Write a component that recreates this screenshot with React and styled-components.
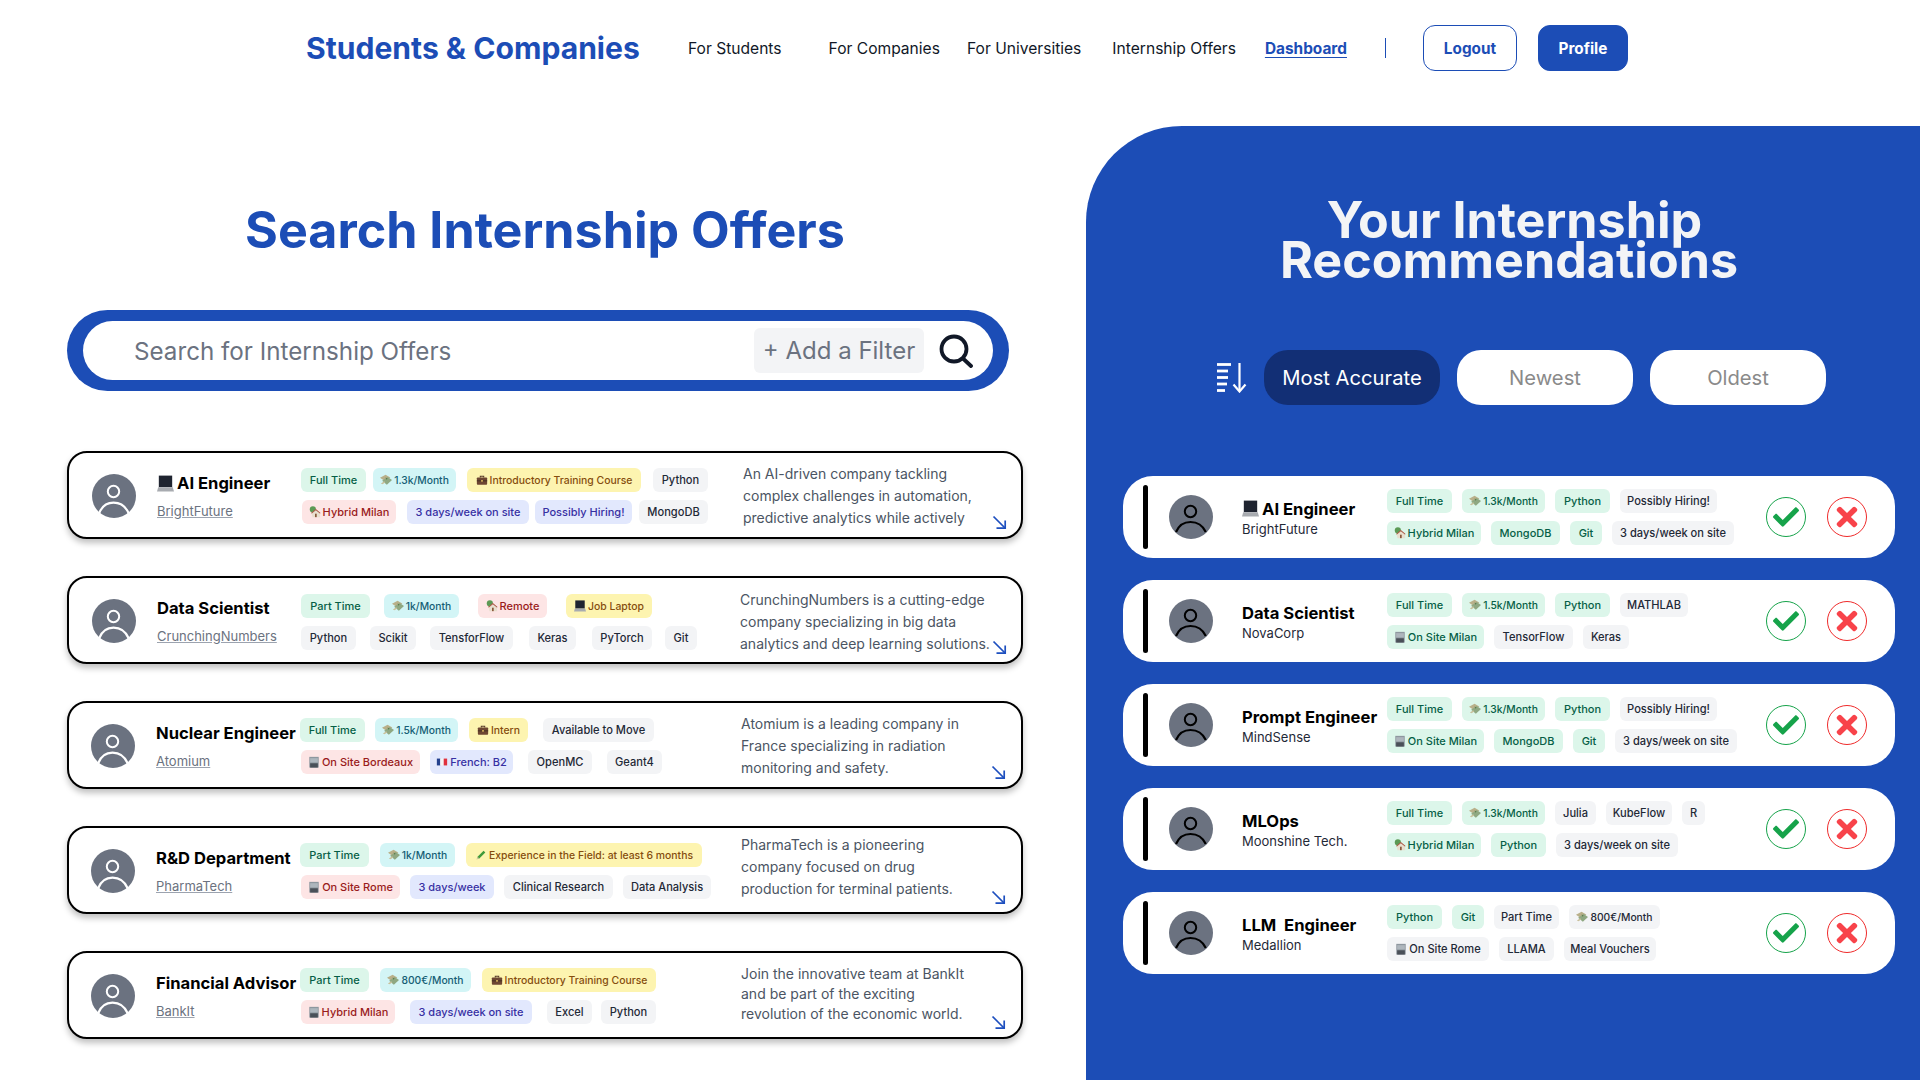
import React from "react";
import styled, { createGlobalStyle } from "styled-components";
import { FaCheck, FaTimes } from "react-icons/fa";

const BLUE = "#1c4db6";

const Global = createGlobalStyle`
  * { box-sizing: border-box; }
  html, body { margin: 0; padding: 0; background: #fff; }
  body { font-family: Inter, "Noto Sans", sans-serif; color: #111827; }
`;

const Page = styled.div`
  width: 1920px;
  height: 1080px;
  overflow: hidden;
  background: #fff;
  display: flex;
  flex-direction: column;
`;

const Nav = styled.nav`
  height: 96px;
  flex: none;
  display: flex;
  align-items: center;
  padding-left: 306px;
`;
const Logo = styled.div`
  font-size: 30.1px;
  font-weight: 700;
  color: ${BLUE};
  width: 382px;
`;
const NavLink = styled.a`
  font-size: ${(p) => (p.$active ? 15.4 : 15.6)}px;
  color: ${(p) => (p.$active ? BLUE : "#111827")};
  font-weight: ${(p) => (p.$active ? 700 : 400)};
  text-decoration: ${(p) => (p.$active ? "underline" : "none")};
  text-underline-offset: 3px;
  margin-left: ${(p) => p.$ml || 0}px;
  white-space: nowrap;
`;
const NavDivider = styled.span`
  width: 1px;
  height: 20px;
  background: ${BLUE};
  margin: 0 37px 0 38px;
`;
const NavButton = styled.button`
  height: 46px;
  width: ${(p) => p.$w}px;
  margin-left: ${(p) => p.$ml || 0}px;
  border-radius: 12px;
  border: 1px solid ${BLUE};
  background: ${(p) => (p.$solid ? BLUE : "#fff")};
  color: ${(p) => (p.$solid ? "#fff" : BLUE)};
  font: 700 15.3px Inter, sans-serif;
`;

const Main = styled.main`
  flex: 1;
  display: flex;
  min-height: 0;
`;

const Left = styled.section`
  width: 1086px;
  flex: none;
  padding: 104px 0 0 67px;
`;
const SearchTitle = styled.h1`
  margin: 0 0 50px 0;
  width: 956px;
  text-align: center;
  font-size: 50.2px;
  line-height: 60px;
  font-weight: 700;
  color: ${BLUE};
`;
const SearchBar = styled.div`
  width: 942px;
  height: 81px;
  padding: 11px 16px;
  background: ${BLUE};
  border-radius: 41px;
  margin-bottom: 60px;
`;
const SearchInner = styled.div`
  height: 59px;
  background: #fff;
  border-radius: 30px;
  display: flex;
  align-items: center;
  padding-left: 51px;
`;
const Placeholder = styled.span`
  flex: 1;
  font-size: 24.2px;
  color: #6b7280;
  padding-top: 1px;
`;
const FilterBox = styled.span`
  width: 170px;
  height: 45px;
  background: #f3f4f6;
  border-radius: 6px;
  display: flex;
  align-items: center;
  justify-content: center;
  font-size: 24px;
  color: #6b7280;
  white-space: nowrap;
`;
const SearchIcon = styled.svg`
  width: 34px;
  height: 34px;
  margin: 0 20px 0 15px;
`;

const CardList = styled.div`
  display: flex;
  flex-direction: column;
  gap: 37px;
`;
const OfferCard = styled.article`
  position: relative;
  width: 956px;
  height: 88px;
  flex: none;
  border: 2px solid #000;
  border-radius: 20px;
  background: #fff;
  box-shadow: 0 4px 6px rgba(0, 0, 0, 0.25);
  display: flex;
  align-items: flex-start;
  padding-left: ${(p) => p.$pad}px;
`;
const Avatar = styled.svg`
  width: 44px;
  height: 44px;
  flex: none;
`;
const OfferAvatar = styled(Avatar)`
  margin-top: 21px;
`;
const OfferPerson = styled.div`
  width: 144px;
  flex: none;
  margin-left: 21px;
  padding-top: 19px;
`;
const Title = styled.div`
  font-size: 16.6px;
  line-height: 22px;
  font-weight: 700;
  color: #000;
  white-space: pre;
  display: flex;
  align-items: center;
  gap: 3px;
`;
const CompanyLink = styled.a`
  display: block;
  margin-top: 9px;
  font-size: 13px;
  line-height: 16px;
  color: #6b7280;
  text-decoration: underline;
  text-decoration-color: #9ca3af;
`;
const OfferTags = styled.div`
  width: ${(p) => p.$w}px;
  flex: none;
  padding-top: ${(p) => p.$top}px;
  display: flex;
  flex-direction: column;
  gap: 8px;
`;
const TagRow = styled.div`
  display: flex;
  gap: ${(p) => p.$gap || 0}px;
`;
const TAG = {
  green: ["#dcf6ea", "#065f46", 11],
  cyan: ["#d3f5f6", "#155e75", 11],
  yellow: ["#fdf4b0", "#854d0e", 10.4],
  red: ["#fde5e5", "#991b1b", 11],
  indigo: ["#e2e8fd", "#3730a3", 11],
  gray: ["#f3f4f6", "#1f2937", 11.1],
};
const Tag = styled.span`
  height: 24px;
  width: ${(p) => p.$w}px;
  margin-left: ${(p) => p.$ml || 0}px;
  border-radius: 6px;
  background: ${(p) => TAG[p.$kind][0]};
  color: ${(p) => TAG[p.$kind][1]};
  font-size: ${(p) => (p.$small ? 10.3 : TAG[p.$kind][2])}px;
  font-weight: 500;
  display: inline-flex;
  align-items: center;
  justify-content: center;
  gap: 2px;
  white-space: nowrap;
  flex: none;
`;
const Desc = styled.p`
  margin: 0;
  padding-top: ${(p) => p.$top}px;
  width: 215px;
  font-size: 14px;
  line-height: ${(p) => p.$lh}px;
  color: #4b5563;
  white-space: nowrap;
`;
const OpenArrow = styled.svg`
  position: absolute;
  right: ${(p) => p.$right}px;
  bottom: 7px;
  width: 15px;
  height: 15px;
`;

const Panel = styled.section`
  flex: 1;
  margin-top: 30px;
  background: ${BLUE};
  border-top-left-radius: 96px;
  padding: 74px 25px 0 37px;
`;
const PanelTitle = styled.h2`
  margin: 0 0 70px;
  text-align: center;
  color: #f3f4f6;
  font-size: 50.2px;
  line-height: 40px;
  font-weight: 700;
`;
const PanelTitleFirst = styled.span`
  display: block;
  padding-left: 11px;
`;
const SortRow = styled.div`
  display: flex;
  align-items: center;
  gap: 17px;
  padding-left: 94px;
  margin-bottom: 71px;
`;
const SortIcon = styled.svg`
  width: 30px;
  height: 30px;
  flex: none;
`;
const SortButton = styled.button`
  width: 176px;
  height: 55px;
  border: 0;
  border-radius: 24px;
  background: ${(p) => (p.$active ? "#122f75" : "#fff")};
  color: ${(p) => (p.$active ? "#fff" : "#8a8a8a")};
  font: 400 20.2px Inter, sans-serif;
`;
const RecList = styled.div`
  display: flex;
  flex-direction: column;
  gap: 22px;
`;
const RecCard = styled.article`
  height: 82px;
  background: #fff;
  border-radius: 30px;
  display: flex;
  align-items: center;
  padding: 0 28px 0 20px;
`;
const Bar = styled.span`
  width: 5px;
  height: 64px;
  border-radius: 3px;
  background: #000;
  flex: none;
`;
const RecAvatar = styled(Avatar)`
  margin-left: 21px;
`;
const RecPerson = styled.div`
  width: 145px;
  margin-left: 29px;
  flex: none;
`;
const RecCompany = styled.div`
  font-size: 13px;
  line-height: 16px;
  margin-top: 1px;
  color: #1f2937;
`;
const RecTags = styled.div`
  flex: 1;
  display: flex;
  flex-direction: column;
  gap: 8px;
`;
const RoundAction = styled.button`
  width: 40px;
  height: 40px;
  padding: 0;
  border-radius: 50%;
  background: #fff;
  border: 1px solid ${(p) => p.$color};
  color: ${(p) => p.$fill};
  margin-left: ${(p) => p.$ml}px;
  display: flex;
  align-items: center;
  justify-content: center;
  font-size: ${(p) => p.$size}px;
  flex: none;
`;

/* ---- drawn pictures ---- */
const Emoji = ({ name, size = 12 }) => {
  const s = { width: size, height: size, flex: "none" };
  switch (name) {
    case "laptop":
      return (
        <svg viewBox="0 0 14 14" style={s}>
          <rect x="1.5" y="0.5" width="11" height="9.5" fill="#1f2430" />
          <path d="M1 10h12l1 3.5H0z" fill="#a8abb0" />
        </svg>
      );
    case "money":
      return (
        <svg viewBox="0 0 14 14" style={s}>
          <path d="M0 4.5l6.5-3.5 5.5 3-6 4.5z" fill="#b9b08a" />
          <path d="M2.5 8l6.5-4.5 5 3.5-6 5.5z" fill="#8fa882" />
          <path d="M6.5 4l2.5 1.2-1.5 1.5z" fill="#5f7c4c" />
          <path d="M1 11l4-2.5 1 1.5-3 2z" fill="#c8bf9a" />
        </svg>
      );
    case "case":
      return (
        <svg viewBox="0 0 14 14" style={s}>
          <path d="M5 4V2.5h4V4" stroke="#5a3b2a" strokeWidth="1.2" fill="none" />
          <rect x="1" y="4" width="12" height="8.5" rx="1" fill="#6d4632" />
          <rect x="1" y="7.5" width="12" height="1" fill="#3f2a20" />
          <rect x="6" y="7" width="2" height="2" fill="#d6b25e" />
        </svg>
      );
    case "house":
      return (
        <svg viewBox="0 0 14 14" style={s}>
          <circle cx="4.5" cy="4" r="3.6" fill="#5c9a55" />
          <path d="M3 8l5-4 5 4v5H4z" fill="#e9dfcf" />
          <path d="M2.5 8.2L8 3.5l5.5 4.7-.8.6L8 5 3.3 8.8z" fill="#a9503e" />
          <rect x="7" y="9" width="2" height="4" fill="#8a5a3c" />
        </svg>
      );
    case "building":
      return (
        <svg viewBox="0 0 14 14" style={s}>
          <rect x="1.5" y="1" width="11" height="12.5" fill="#8e979f" />
          <rect x="2.5" y="2.5" width="9" height="5" fill="#aeb6bd" />
          <rect x="2.5" y="8.5" width="9" height="5" fill="#4a5058" />
        </svg>
      );
    case "flag":
      return (
        <svg viewBox="0 0 14 14" style={s}>
          <rect x="1" y="3" width="4" height="8" fill="#23408e" />
          <rect x="5" y="3" width="4" height="8" fill="#f4f4f4" />
          <rect x="9" y="3" width="4" height="8" fill="#e0313e" />
        </svg>
      );
    case "pencil":
      return (
        <svg viewBox="0 0 14 14" style={s}>
          <path d="M2 12l1-3 7-7 2 2-7 7z" fill="#3f9a3a" />
          <path d="M2 12l1-3 2 2z" fill="#d9c9a0" />
        </svg>
      );
    default:
      return null;
  }
};

const Arrow = ({ right }) => (
  <OpenArrow $right={right} viewBox="0 0 15 15" fill="none" stroke="#1d4fbf" strokeWidth="1.7">
    <path d="M1.5 1.5L13 13" />
    <path d="M13.2 5.5V13.2H4.5" />
  </OpenArrow>
);

const TagView = ({ t, k, w, e, ml }) => (
  <Tag $kind={k} $w={w} $ml={ml} $small={e === "money"}>
    {e && <Emoji name={e} />}
    {t}
  </Tag>
);

const offers = [
  {
    name: "AI Engineer", emoji: "laptop", co: "BrightFuture", pad: 23, w: 442, top: 15, dtop: 10, lh: 22, arrow: 14,
    desc: ["An AI-driven company tackling", "complex challenges in automation,", "predictive analytics while actively"],
    rows: [
      [
        { t: "Full Time", k: "green", w: 65 },
        { t: "1.3k/Month", k: "cyan", w: 83, e: "money", ml: 7 },
        { t: "Introductory Training Course", k: "yellow", w: 174, e: "case", ml: 11 },
        { t: "Python", k: "gray", w: 55, ml: 12 },
      ],
      [
        { t: "Hybrid Milan", k: "red", w: 94, e: "house", ml: 1 },
        { t: "3 days/week on site", k: "indigo", w: 122, ml: 11 },
        { t: "Possibly Hiring!", k: "indigo", w: 97, ml: 6 },
        { t: "MongoDB", k: "gray", w: 69, ml: 7 },
      ],
    ],
  },
  {
    name: "Data Scientist", co: "CrunchingNumbers", pad: 23, w: 439, top: 16, dtop: 11, lh: 22, arrow: 14,
    desc: ["CrunchingNumbers is a cutting-edge", "company specializing in big data", "analytics and deep learning solutions."],
    rows: [
      [
        { t: "Part Time", k: "green", w: 69 },
        { t: "1k/Month", k: "cyan", w: 75, e: "money", ml: 14 },
        { t: "Remote", k: "red", w: 69, e: "house", ml: 19 },
        { t: "Job Laptop", k: "yellow", w: 86, e: "laptop", ml: 19 },
      ],
      [
        { t: "Python", k: "gray", w: 55 },
        { t: "Scikit", k: "gray", w: 46, ml: 14 },
        { t: "TensforFlow", k: "gray", w: 83, ml: 14 },
        { t: "Keras", k: "gray", w: 47, ml: 16 },
        { t: "PyTorch", k: "gray", w: 60, ml: 16 },
        { t: "Git", k: "gray", w: 32, ml: 13 },
      ],
    ],
  },
  {
    name: "Nuclear Engineer", co: "Atomium", pad: 22, w: 441, top: 15, dtop: 10, lh: 22, arrow: 15,
    desc: ["Atomium is a leading company in", "France specializing in radiation", "monitoring and safety."],
    rows: [
      [
        { t: "Full Time", k: "green", w: 65 },
        { t: "1.5k/Month", k: "cyan", w: 83, e: "money", ml: 10 },
        { t: "Intern", k: "yellow", w: 59, e: "case", ml: 11 },
        { t: "Available to Move", k: "gray", w: 111, ml: 15 },
      ],
      [
        { t: "On Site Bordeaux", k: "red", w: 119, e: "building", ml: 1 },
        { t: "French: B2", k: "indigo", w: 83, e: "flag", ml: 10 },
        { t: "OpenMC", k: "gray", w: 64, ml: 15 },
        { t: "Geant4", k: "gray", w: 55, ml: 15 },
      ],
    ],
  },
  {
    name: "R&D Department", co: "PharmaTech", pad: 22, w: 441, top: 15, dtop: 6, lh: 22, arrow: 15,
    desc: ["PharmaTech is a pioneering", "company focused on drug", "production for terminal patients."],
    rows: [
      [
        { t: "Part Time", k: "green", w: 69 },
        { t: "1k/Month", k: "cyan", w: 75, e: "money", ml: 11 },
        { t: "Experience in the Field: at least 6 months", k: "yellow", w: 236, e: "pencil", ml: 11 },
      ],
      [
        { t: "On Site Rome", k: "red", w: 99, e: "building", ml: 1 },
        { t: "3 days/week", k: "indigo", w: 84, ml: 10 },
        { t: "Clinical Research", k: "gray", w: 109, ml: 10 },
        { t: "Data Analysis", k: "gray", w: 88, ml: 10 },
      ],
    ],
  },
  {
    name: "Financial Advisor", co: "BankIt", pad: 22, w: 441, top: 15, dtop: 11, lh: 20, arrow: 15,
    desc: ["Join the innovative team at BankIt", "and be part of the exciting", "revolution of the economic world."],
    rows: [
      [
        { t: "Part Time", k: "green", w: 69 },
        { t: "800€/Month", k: "cyan", w: 91, e: "money", ml: 11 },
        { t: "Introductory Training Course", k: "yellow", w: 174, e: "case", ml: 11 },
      ],
      [
        { t: "Hybrid Milan", k: "red", w: 94, e: "building", ml: 1 },
        { t: "3 days/week on site", k: "indigo", w: 122, ml: 15 },
        { t: "Excel", k: "gray", w: 45, ml: 15 },
        { t: "Python", k: "gray", w: 55, ml: 9 },
      ],
    ],
  },
];

const recs = [
  {
    name: "AI Engineer", emoji: "laptop", co: "BrightFuture",
    rows: [
      [["Full Time", "green", 65], ["1.3k/Month", "green", 83, "money"], ["Python", "green", 55], ["Possibly Hiring!", "gray", 97]],
      [["Hybrid Milan", "green", 94, "house"], ["MongoDB", "green", 69], ["Git", "green", 32], ["3 days/week on site", "gray", 122]],
    ],
  },
  {
    name: "Data Scientist", co: "NovaCorp",
    rows: [
      [["Full Time", "green", 65], ["1.5k/Month", "green", 83, "money"], ["Python", "green", 55], ["MATHLAB", "gray", 68]],
      [["On Site Milan", "green", 97, "building"], ["TensorFlow", "gray", 79], ["Keras", "gray", 46]],
    ],
  },
  {
    name: "Prompt Engineer", co: "MindSense",
    rows: [
      [["Full Time", "green", 65], ["1.3k/Month", "green", 83, "money"], ["Python", "green", 55], ["Possibly Hiring!", "gray", 97]],
      [["On Site Milan", "green", 97, "building"], ["MongoDB", "green", 69], ["Git", "green", 32], ["3 days/week on site", "gray", 122]],
    ],
  },
  {
    name: "MLOps", co: "Moonshine Tech.",
    rows: [
      [["Full Time", "green", 65], ["1.3k/Month", "green", 83, "money"], ["Julia", "gray", 41], ["KubeFlow", "gray", 66], ["R", "gray", 23]],
      [["Hybrid Milan", "green", 94, "house"], ["Python", "green", 55], ["3 days/week on site", "gray", 122]],
    ],
  },
  {
    name: "LLM  Engineer", co: "Medallion",
    rows: [
      [["Python", "green", 55], ["Git", "green", 32], ["Part Time", "gray", 65], ["800€/Month", "gray", 91, "money"]],
      [["On Site Rome", "gray", 102, "building"], ["LLAMA", "gray", 55], ["Meal Vouchers", "gray", 92]],
    ],
  },
];

export default function App() {
  return (
    <Page>
      <Global />
      <Nav>
        <Logo>Students &amp; Companies</Logo>
        <NavLink>For Students</NavLink>
        <NavLink $ml={47}>For Companies</NavLink>
        <NavLink $ml={27}>For Universities</NavLink>
        <NavLink $ml={31}>Internship Offers</NavLink>
        <NavLink $ml={29} $active>Dashboard</NavLink>
        <NavDivider />
        <NavButton $w={94}>Logout</NavButton>
        <NavButton $w={90} $ml={21} $solid>Profile</NavButton>
      </Nav>
      <Main>
        <Left>
          <SearchTitle>Search Internship Offers</SearchTitle>
          <SearchBar>
            <SearchInner>
              <Placeholder>Search for Internship Offers</Placeholder>
              <FilterBox>+ Add a Filter</FilterBox>
              <SearchIcon viewBox="0 0 34 34" fill="none" stroke="#111827" strokeWidth="3.8" strokeLinecap="round">
                <circle cx="15" cy="15" r="12.5" />
                <path d="M24 24.5L32 32" />
              </SearchIcon>
            </SearchInner>
          </SearchBar>
          <CardList>
            {offers.map((o) => (
              <OfferCard key={o.name} $pad={o.pad}>
                <OfferAvatar viewBox="0 0 44 44">
                  <circle cx="22" cy="22" r="22" fill="#6b7280" />
                  <circle cx="21.5" cy="17.5" r="5.7" fill="none" stroke="#fff" strokeWidth="2" />
                  <path d="M7 39.5C10 32 15 28.7 21.5 28.7S33.5 32 36.8 39.5" fill="none" stroke="#fff" strokeWidth="2.2" />
                </OfferAvatar>
                <OfferPerson>
                  <Title>
                    {o.emoji && <Emoji name={o.emoji} size={17} />}
                    {o.name}
                  </Title>
                  <CompanyLink>{o.co}</CompanyLink>
                </OfferPerson>
                <OfferTags $w={o.w} $top={o.top}>
                  {o.rows.map((r, i) => (
                    <TagRow key={i}>
                      {r.map((t) => (
                        <TagView key={t.t} {...t} />
                      ))}
                    </TagRow>
                  ))}
                </OfferTags>
                <Desc $top={o.dtop} $lh={o.lh}>
                  {o.desc.map((l) => (
                    <React.Fragment key={l}>
                      {l}
                      <br />
                    </React.Fragment>
                  ))}
                </Desc>
                <Arrow right={o.arrow} />
              </OfferCard>
            ))}
          </CardList>
        </Left>
        <Panel>
          <PanelTitle>
            <PanelTitleFirst>Your Internship</PanelTitleFirst>
            Recommendations
          </PanelTitle>
          <SortRow>
            <SortIcon viewBox="0 0 30 30" fill="none" stroke="#fff">
              <g strokeWidth="2.8">
                <path d="M0 1.5h14" />
                <path d="M0 8h11" />
                <path d="M0 14.5h11" />
                <path d="M0 21h10" />
                <path d="M0 27.5h8" />
              </g>
              <path d="M22.5 0v28" strokeWidth="2.2" />
              <path d="M16.5 21.5l6 7 6-7" strokeWidth="2.2" />
            </SortIcon>
            <SortButton $active>Most Accurate</SortButton>
            <SortButton>Newest</SortButton>
            <SortButton>Oldest</SortButton>
          </SortRow>
          <RecList>
            {recs.map((r) => (
              <RecCard key={r.name}>
                <Bar />
                <RecAvatar viewBox="0 0 44 44">
                  <circle cx="22" cy="22" r="22" fill="#6b7280" />
                  <circle cx="21.5" cy="16.5" r="5.7" fill="none" stroke="#000" strokeWidth="2" />
                  <path d="M7 37C10 30 15 27 21.5 27S33.5 30 36.8 37" fill="none" stroke="#000" strokeWidth="2.2" />
                </RecAvatar>
                <RecPerson>
                  <Title>
                    {r.emoji && <Emoji name={r.emoji} size={17} />}
                    {r.name}
                  </Title>
                  <RecCompany>{r.co}</RecCompany>
                </RecPerson>
                <RecTags>
                  {r.rows.map((row, i) => (
                    <TagRow key={i} $gap={10}>
                      {row.map(([t, k, w, e]) => (
                        <TagView key={t} t={t} k={k} w={w} e={e} />
                      ))}
                    </TagRow>
                  ))}
                </RecTags>
                <RoundAction $color="#16a34a" $fill="#16a34a" $ml={0} $size={26}>
                  <FaCheck />
                </RoundAction>
                <RoundAction $color="#ef2b2b" $fill="#f8434a" $ml={21} $size={30}>
                  <FaTimes />
                </RoundAction>
              </RecCard>
            ))}
          </RecList>
        </Panel>
      </Main>
    </Page>
  );
}
